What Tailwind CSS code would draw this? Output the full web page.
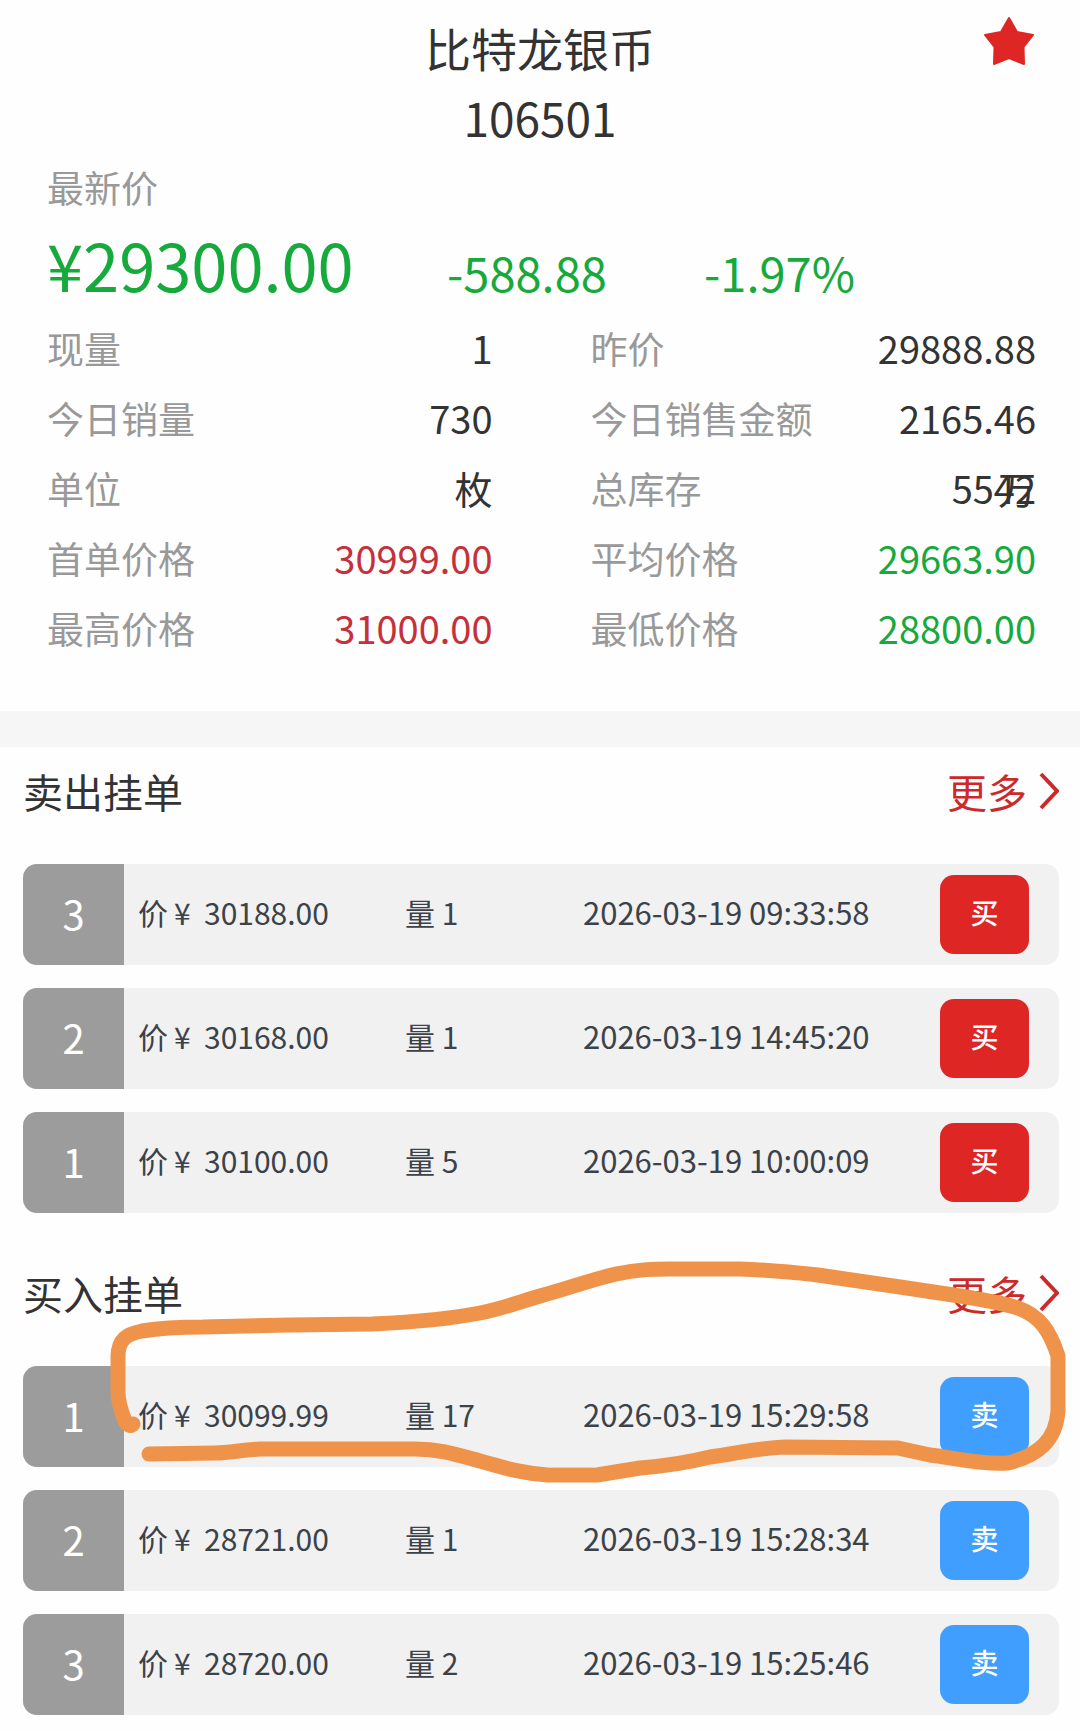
<!DOCTYPE html>
<html lang="zh-CN">
<head>
  <meta charset="UTF-8" />
  <meta name="viewport" content="width=device-width, initial-scale=1" />
  <title>比特龙银币 106501</title>
  <script src="https://cdn.jsdelivr.net/npm/@tailwindcss/browser@4"></script>
</head>
<body class="bg-[#fefefe] min-h-screen text-[#333333] font-['Noto_Sans_CJK_SC',sans-serif]">

  <!-- Title -->
  <header class="grid grid-cols-[1fr_auto_1fr] pt-[12px] px-[46px]">
    <h1 class="col-start-2 text-center text-[46px] leading-[70px]">
      <span class="block">比特龙银币</span>
      <span class="block">106501</span>
    </h1>
    <button type="button" aria-label="收藏" class="justify-self-end self-start mt-[4px]">
      <svg class="w-[50px] h-[50px]" viewBox="0 0 50 50" fill="#de2624" stroke="#de2624" stroke-width="2" stroke-linejoin="round">
        <path d="M25 2 L33 16 L49 19 L39.5 31 L40 48 L25 42 L10 48 L10.500 31 L1 19 L17 16 Z" />
      </svg>
    </button>
  </header>

  <!-- Quote -->
  <section class="pl-[47px] pr-[44px] pb-[60px]">
    <p class="text-[37px] leading-[70px] text-[#999999]">最新价</p>
    <div class="grid grid-cols-[400px_257px_1fr] items-baseline text-[#16a93b] leading-[84px] text-[47px]">
      <span class="text-[65px]">¥29300.00</span>
      <span>-588.88</span>
      <span>-1.97%</span>
    </div>
    <dl id="stats" class="grid grid-cols-2 gap-x-[98px] gap-y-[24px] mt-[11px]"></dl>
  </section>

  <div class="h-[36px] bg-[#f6f6f6]"></div>

  <!-- Sell orders -->
  <section class="pl-[23px] pr-[21px] pt-[14px]">
    <div class="flex items-center justify-between text-[40px] leading-[60px] mb-[43px]">
      <h2>卖出挂单</h2>
      <a href="#sell" class="flex items-center gap-[12px] text-[#cc2a2a]">更多
        <svg class="w-[20px] h-[38px]" viewBox="0 0 20 38" fill="none" stroke="#cc2a2a" stroke-width="4"><path d="M2 2 L18 19 L2 36" /></svg>
      </a>
    </div>
    <ul id="sell" class="space-y-[23px]"></ul>
  </section>

  <!-- Buy orders -->
  <section class="relative pl-[23px] pr-[21px] pt-[50px] pb-[14px]">
    <div class="flex items-center justify-between text-[40px] leading-[60px] mb-[43px]">
      <h2>买入挂单</h2>
      <a href="#buy" class="flex items-center gap-[12px] text-[#cc2a2a]">更多
        <svg class="w-[20px] h-[38px]" viewBox="0 0 20 38" fill="none" stroke="#cc2a2a" stroke-width="4"><path d="M2 2 L18 19 L2 36" /></svg>
      </a>
    </div>
    <ul id="buy" class="space-y-[23px]"></ul>

    <!-- Marker stroke around the best bid -->
    <svg class="absolute left-0 top-0 w-full pointer-events-none" viewBox="0 1214 1080 517" fill="none" stroke="#ef934b" stroke-width="15" stroke-linecap="round" stroke-linejoin="round">
      <path d="M133 1425 C131 1428 127 1426 125 1422 C121 1412 118 1402 118 1393 L118 1358 C118 1340 127 1335 142 1332 C160 1329 180 1328 203 1328 L290 1326 L372 1325 C413 1323 450 1320 480 1314 C505 1309 522 1302 540 1297 C570 1289 590 1281 616 1275 C640 1270 655 1270 670 1270 L740 1270 C770 1271 790 1273 818 1276 L900 1288 L960 1297 C985 1301 1005 1305 1018 1309 C1040 1317 1050 1332 1058 1357 L1058 1412 C1056 1440 1040 1456 1008 1464 C980 1466 950 1458 930 1456 L898 1449 L785 1448 C755 1449 735 1455 710 1458 C690 1463 665 1467 640 1469 L597 1476 L548 1476 C520 1474 505 1469 480 1462 C455 1455 440 1450 415 1450 L260 1450 C240 1451 230 1454 215 1454 L149 1455" />
    </svg>
  </section>

  <script>
    const stats = [
      { label: "现量", value: "1" },
      { label: "昨价", value: "29888.88" },
      { label: "今日销量", value: "730" },
      { label: "今日销售金额", value: "2165.46" },
      { label: "单位", value: "枚" },
      { label: "总库存", value: "5542", unit: "万" },
      { label: "首单价格", value: "30999.00", color: "text-[#c5303a]" },
      { label: "平均价格", value: "29663.90", color: "text-[#16a93b]" },
      { label: "最高价格", value: "31000.00", color: "text-[#c5303a]" },
      { label: "最低价格", value: "28800.00", color: "text-[#16a93b]" }
    ];

    const sellOrders = [
      { no: 3, price: "30188.00", qty: 1, time: "2026-03-19 09:33:58" },
      { no: 2, price: "30168.00", qty: 1, time: "2026-03-19 14:45:20" },
      { no: 1, price: "30100.00", qty: 5, time: "2026-03-19 10:00:09" }
    ];

    const buyOrders = [
      { no: 1, price: "30099.99", qty: 17, time: "2026-03-19 15:29:58" },
      { no: 2, price: "28721.00", qty: 1, time: "2026-03-19 15:28:34" },
      { no: 3, price: "28720.00", qty: 2, time: "2026-03-19 15:25:46" }
    ];

    document.getElementById("stats").innerHTML = stats.map(s => `
      <div class="flex justify-between leading-[46px]">
        <dt class="text-[37px] text-[#999999]">${s.label}</dt>
        <dd class="relative text-[38px] ${s.color || ""}">${s.value}${s.unit ? `<span class="absolute right-0 top-0">${s.unit}</span>` : ""}</dd>
      </div>`).join("");

    // One order row, with its trade button
    function orderRow(order, action, color) {
      return `
        <li class="flex items-center h-[101px] rounded-[14px] overflow-hidden bg-[#f1f1f1] text-[30px] text-[#3b4249]">
          <span class="w-[101px] h-full shrink-0 flex items-center justify-center pb-[4px] bg-[#9c9c9c] text-white text-[40px]">${order.no}</span>
          <div class="flex-1 grid grid-cols-[267px_178px_1fr] items-baseline pl-[14px] pb-[4px] whitespace-nowrap">
            <span class="flex"><span>价</span><span class="w-[36px] pl-[6px]">¥</span><span>${order.price}</span></span>
            <span>量 ${order.qty}</span>
            <time class="text-[31px]">${order.time}</time>
          </div>
          <button type="button" class="w-[89px] h-[79px] mr-[30px] pb-[6px] shrink-0 rounded-[14px] text-white text-[28px] font-medium ${color}">${action}</button>
        </li>`;
    }

    document.getElementById("sell").innerHTML = sellOrders.map(o => orderRow(o, "买", "bg-[#de2624]")).join("");
    document.getElementById("buy").innerHTML = buyOrders.map(o => orderRow(o, "卖", "bg-[#409eff]")).join("");
  </script>
</body>
</html>
